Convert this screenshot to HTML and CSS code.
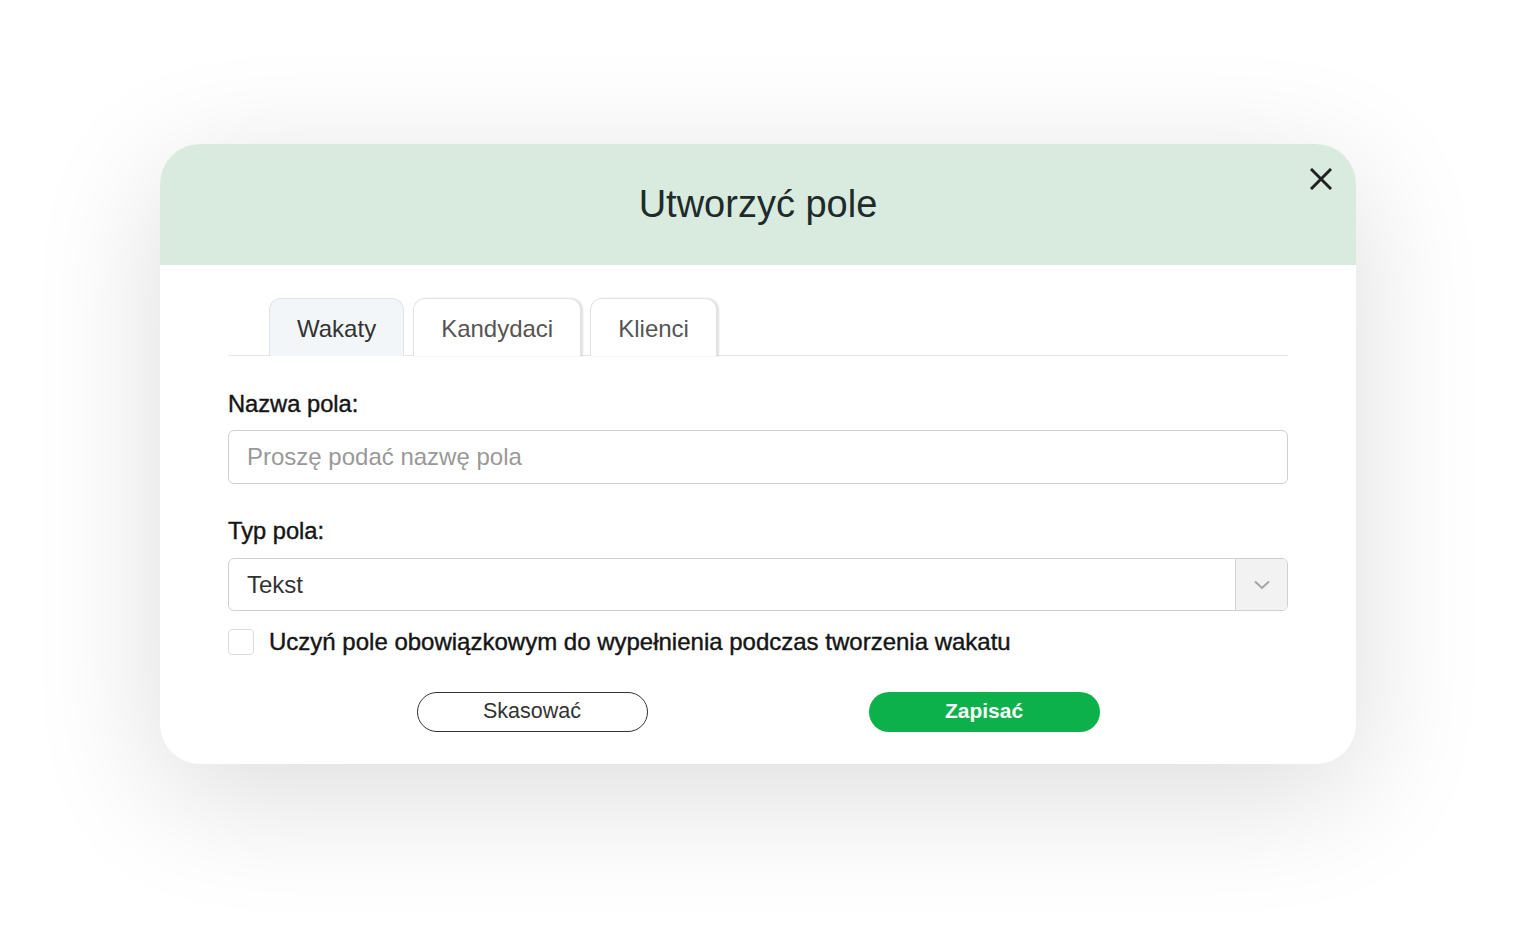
FILE: index.html
```html
<!DOCTYPE html>
<html lang="pl">
<head>
  <meta charset="UTF-8">
  <meta name="viewport" content="width=device-width, initial-scale=1.0">
  <title>Utworzyć pole</title>
  <link rel="stylesheet" href="styles.css">
</head>
<body>
  <div class="modal">
    <div class="modal-header">
      <h1>Utworzyć pole</h1>
      <button type="button" class="close" aria-label="Zamknij">
        <svg width="22" height="22" viewBox="0 0 22 22"><path d="M2 2L20 20M20 2L2 20" stroke="#222" stroke-width="3" stroke-linecap="square"/></svg>
      </button>
    </div>

    <div class="modal-body">
      <div class="tabs">
        <span class="tab active">Wakaty</span>
        <span class="tab">Kandydaci</span>
        <span class="tab">Klienci</span>
      </div>

      <label class="field-label" for="nazwa">Nazwa pola:</label>
      <input id="nazwa" class="field" type="text" placeholder="Proszę podać nazwę pola">

      <label class="field-label second" for="typ">Typ pola:</label>
      <div class="select">
        <span class="select-value">Tekst</span>
        <span class="select-btn">
          <svg width="18" height="10" viewBox="0 0 18 10"><path d="M2 1.5L9 8L16 1.5" fill="none" stroke="#a5a5a5" stroke-width="2"/></svg>
        </span>
      </div>

      <label class="check">
        <span class="box"></span>
        Uczyń pole obowiązkowym do wypełnienia podczas tworzenia wakatu
      </label>

      <div class="actions">
        <button type="button" class="btn btn-outline">Skasować</button>
        <button type="button" class="btn btn-green">Zapisać</button>
      </div>
    </div>
  </div>
</body>
</html>
```

FILE: styles.css
```css
* {
  box-sizing: border-box;
}

html, body {
  min-height: 100%;
}

body {
  margin: 0;
  min-height: 940px;
  padding-top: 144px;
  background-color: #ffffff;
  font-family: "Liberation Sans", Arial, sans-serif;
  color: #222;
}

.modal {
  width: 1196px;
  margin: 0 auto;
  background: #ffffff;
  border-radius: 40px;
  overflow: hidden;
  box-shadow: 0 30px 130px rgba(0, 0, 0, 0.14);
}

.modal-header {
  position: relative;
  height: 121px;
  background-color: #d9eadf;
  display: flex;
  align-items: center;
  justify-content: center;
}

.modal-header h1 {
  margin: 0 0 1px;
  font-size: 38px;
  font-weight: normal;
  color: #1f2a2a;
}

.close {
  position: absolute;
  top: 24px;
  right: 24px;
  border: none;
  background: none;
  padding: 0;
  cursor: pointer;
}

.modal-body {
  padding: 33px 68px 32px;
}

.tabs {
  display: flex;
  gap: 9px;
  padding-left: 41px;
  border-bottom: 1.5px solid #e6e6e6;
}

.tab {
  height: 58px;
  padding: 3px 27px 0;
  display: flex;
  align-items: center;
  font-size: 24px;
  color: #555;
  background: #fff;
  border: 1px solid #e2e2e2;
  border-bottom: none;
  border-radius: 12px 12px 0 0;
  box-shadow: 2px 0 2px rgba(0, 0, 0, 0.12);
  margin-bottom: -1px;
}

.tab.active {
  background: #f3f6f9;
  color: #333;
  box-shadow: none;
}

.field-label {
  display: block;
  margin-top: 34px;
  margin-bottom: 12px;
  font-size: 23.7px;
  line-height: 28px;
  color: #151515;
  -webkit-text-stroke: 0.4px #151515;
}

.field-label.second {
  margin-top: 33px;
  margin-bottom: 13px;
}

.field {
  display: block;
  width: 100%;
  height: 54px;
  padding: 0 18px;
  border: 1.5px solid #cfcfcf;
  border-radius: 6px;
  font-family: inherit;
  font-size: 24px;
  color: #333;
  outline: none;
}

.field::placeholder {
  color: #999;
}

.select {
  display: flex;
  height: 53px;
  border: 1.5px solid #cfcfcf;
  border-radius: 6px;
  overflow: hidden;
}

.select-value {
  flex: 1;
  display: flex;
  align-items: center;
  padding-left: 18px;
  font-size: 24px;
  color: #333;
}

.select-btn {
  width: 52px;
  display: flex;
  align-items: center;
  justify-content: center;
  background: #f2f2f2;
  border-left: 1.5px solid #d5d5d5;
}

.check {
  display: flex;
  align-items: center;
  gap: 15px;
  margin-top: 18px;
  font-size: 24px;
  line-height: 26px;
  color: #151515;
  -webkit-text-stroke: 0.4px #151515;
}

.box {
  width: 26px;
  height: 26px;
  border: 1.5px solid #dcdcdc;
  border-radius: 4px;
  background: #fff;
}

.actions {
  display: flex;
  justify-content: center;
  gap: 221px;
  margin-top: 37px;
}

.btn {
  width: 231px;
  height: 40px;
  padding-bottom: 3px;
  border-radius: 20px;
  font-family: inherit;
  cursor: pointer;
}

.btn-outline {
  background: #fff;
  border: 1.5px solid #333;
  color: #333;
  font-size: 21.5px;
}

.btn-green {
  background: #0cb14b;
  border: none;
  color: #fff;
  font-size: 21px;
  font-weight: bold;
}
```
